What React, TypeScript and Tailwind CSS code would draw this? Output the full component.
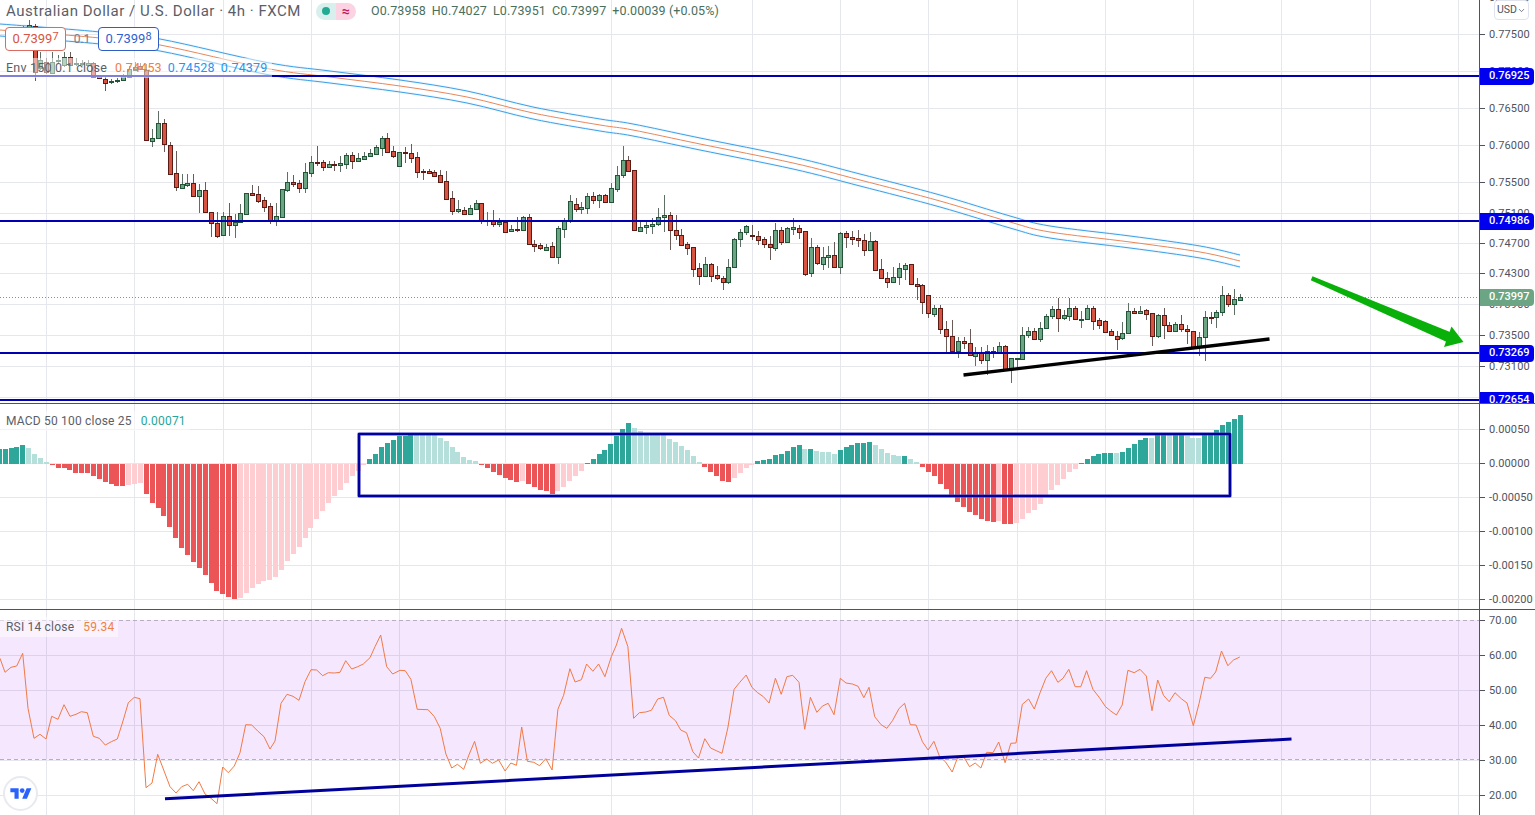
import { ChevronDown } from "lucide-react";

// chart geometry shared by all panes
const LAST_X = 1240;
const STEP = 5.88;
const GRID_X = [46, 134, 223, 311, 399, 505, 611, 752, 840, 928, 1017, 1105, 1193, 1281, 1370, 1458];

// candles: [body top, body bottom, wick top, wick bottom, up]
type Candle = [number, number, number, number, number];
const candles: Candle[] = [
  [32, 35, 30, 37, 1], [30, 33, 28, 35, 0], [28, 31, 26, 33, 1], [25, 33, 20, 40, 1], [26, 72, 24, 81, 0],
  [60, 68, 52, 70, 1], [62, 72, 58, 74, 0], [62, 73, 52, 74, 1], [60, 61, 55, 64, 1], [57, 65, 52, 67, 1],
  [57, 65, 52, 66, 0], [63, 64, 58, 66, 1], [63, 64, 60, 66, 1], [63, 65, 60, 66, 1], [63, 77, 62, 78, 0],
  [76, 78, 75, 79, 0], [79, 83, 76, 91, 0], [81, 82, 79, 84, 1], [80, 81, 78, 83, 1], [75, 80, 74, 81, 1],
  [69, 77, 66, 78, 1], [67, 70, 62, 71, 1], [66, 69, 63, 70, 0], [70, 140, 64, 140, 0], [137.5, 140.5, 129, 147, 1],
  [123, 137.5, 111, 138, 1], [123, 144, 119, 152, 0], [144.5, 173, 142, 174, 0], [173, 187, 151, 191, 0], [184, 188, 174, 189, 1],
  [183, 185, 174, 187, 1], [183, 196, 174, 197, 0], [190, 196, 184, 213, 1], [190, 212, 182, 213, 0], [212, 223, 212, 237, 0],
  [223, 236, 212, 238, 0], [216, 235, 212, 236, 1], [216, 225, 203, 236, 0], [222, 225, 214, 238, 1], [213, 222, 204, 223, 1],
  [193, 214, 193, 214, 1], [193, 195, 185, 195, 0], [194, 201, 186, 203, 0], [200, 207, 197, 212, 0], [206, 221, 203, 224, 0],
  [216, 221, 203, 226, 1], [189, 217, 189, 217, 1], [182, 190, 172, 192, 1], [182, 184, 175, 187, 0], [183, 188, 180, 193, 0],
  [172, 188, 163, 193, 1], [162, 173, 156, 177, 1], [162, 163, 146, 166, 0], [162, 167, 160, 171, 0], [164, 167, 161, 168, 1],
  [164, 165, 161, 171, 0], [163, 165, 156, 172, 1], [155, 164, 153, 169, 1], [155, 161, 152, 169, 0], [158, 161, 153, 161, 1],
  [156, 159, 152, 159, 1], [153, 156, 149, 157, 1], [147, 154, 145, 155, 1], [138, 148, 136, 156, 1], [138, 152, 133, 152, 0],
  [151, 156, 146, 158, 0], [152, 166, 152, 167, 1], [152, 153, 147, 163, 0], [153, 158, 144, 163, 0], [157, 172, 152, 178, 0],
  [171, 172, 169, 180, 0], [171, 173, 169, 173, 0], [172, 176, 170, 177, 0], [175, 182, 170, 183, 0], [181, 199, 171, 199, 0],
  [198, 211, 191, 215, 0], [209, 211, 200, 213, 1], [210, 214, 207, 215, 0], [208, 214, 205, 214, 1], [203, 209, 200, 210, 1],
  [203, 221, 203, 224, 0], [220, 221, 212, 226, 1], [220, 224, 210, 227, 0], [222, 224, 218, 227, 1], [222, 232, 220, 232, 0],
  [229, 231, 225, 232, 1], [229, 230, 217, 232, 0], [217, 230, 216, 231, 1], [217, 244, 214, 245, 0], [244, 246, 240, 252, 0],
  [245, 248, 243, 250, 0], [246.5, 249, 244, 250, 1], [246, 257, 242, 258, 0], [228, 257, 226, 264, 1], [221, 229, 218, 238, 1],
  [201, 221, 195, 223, 1], [204, 209, 198, 212, 0], [207, 209, 202, 214, 1], [196, 208, 193, 214, 1], [196, 200, 192, 204, 0],
  [195, 200, 194, 208, 1], [195, 202, 194, 203, 0], [188, 202, 183, 203, 1], [175, 189, 166, 192, 1], [160, 175, 146, 178, 1],
  [160, 171, 156, 172, 0], [170, 230, 170, 230, 0], [226.5, 230, 221, 232, 1], [225, 227, 222, 234, 1], [224, 226, 218, 234, 1],
  [217, 224, 208, 226, 1], [215, 217, 195, 232, 1], [215, 230, 212, 250, 0], [230, 235, 215, 240, 0], [235, 245, 229, 246, 0],
  [244, 247.5, 242, 255, 0], [247, 268.5, 247, 277, 0], [268, 276, 263, 285, 0], [264, 276, 257, 276, 1], [264, 276, 263, 282, 0],
  [275, 278, 266, 280, 0], [278, 281.5, 276, 290, 0], [267, 282, 259, 284, 1], [239, 267, 238, 268, 1], [232, 239, 229, 247, 1],
  [226, 232, 225, 235, 1], [235, 236, 225, 240, 0], [235.5, 239.5, 231, 245, 0], [239, 244, 237, 248, 0], [244, 247, 236, 260, 0],
  [230, 247.5, 223, 251, 1], [230, 242, 227, 245, 0], [228, 242, 227, 243, 1], [227, 229, 218, 235, 1], [227.5, 231.5, 225, 239, 0],
  [231, 274, 231, 276, 0], [247, 273, 238, 277, 1], [247, 263, 245, 265, 0], [257, 263.5, 247, 270, 1], [255, 257, 246, 268, 1],
  [255, 267, 242, 268, 0], [233, 267, 232, 274, 1], [233, 237, 231, 248, 0], [237, 238.5, 231, 245, 0], [238, 240, 230, 247, 0],
  [240, 250, 234, 256, 0], [241, 250, 232, 251, 1], [241, 270, 240, 271, 0], [269, 278, 259, 279, 0], [278, 282, 272, 288, 0],
  [277, 282, 267, 283, 1], [268, 277, 263, 285, 1], [264.5, 268.5, 263, 280, 1], [264, 284, 264, 285, 0], [284, 285.5, 278, 300, 0],
  [285, 302, 284, 314, 0], [295, 313, 295, 318, 0], [308, 313.5, 305, 317, 1], [308, 329, 305, 334, 0], [329, 336, 321, 353, 0],
  [336, 350.5, 320, 354, 0], [341, 350.5, 337, 358, 1], [341, 343, 337, 349, 0], [343, 355, 329, 356, 0], [353, 355.5, 347, 366, 1],
  [353, 360, 347, 364, 0], [351, 360, 345, 375, 1], [351, 352, 347, 358, 0], [346, 352, 342, 352, 1], [346, 369, 345, 370, 0],
  [358, 369, 358, 383, 1], [358, 359, 358, 368, 1], [335, 359, 327, 360, 1], [331, 335, 327, 338, 1], [331, 339, 328, 340, 0],
  [328, 339, 322, 342, 1], [316, 328, 314, 329, 1], [309, 316, 306, 319, 1], [309, 318, 298, 332, 0], [315, 318, 310, 320, 1],
  [308, 316, 298, 321, 1], [308, 319, 306, 320, 0], [319, 319.5, 311, 328, 1], [308, 319, 305, 320, 1], [308, 320.5, 306, 330, 0],
  [320, 325, 318, 329, 0], [321, 331.5, 320, 333, 0], [331, 335, 329, 336, 0], [335.5, 338.5, 331, 350, 0], [333, 338, 322, 340, 1],
  [311, 333, 303, 334, 1], [311, 312.5, 308, 314, 0], [311, 313, 306, 314, 1], [310, 313.5, 309, 320, 0], [313, 336, 313, 346, 0],
  [315, 336, 314, 338, 1], [315, 325, 308, 339, 0], [325, 331, 322, 332, 0], [324, 330.5, 322, 331, 1], [324, 329, 315, 332, 0],
  [329, 331, 325, 344, 0], [331, 347, 331, 348, 0], [337, 347, 332, 356, 1], [317, 337, 311, 361, 1], [317, 317.5, 312, 324, 0],
  [312, 317, 310, 328, 1], [295, 312, 286, 316, 1], [295, 304, 293, 307, 0], [299, 304, 289, 315, 1], [297, 299.5, 294, 301, 1],
];

// envelope basis as x,y pairs, bands sit 6px either side
const envBasis: [number, number][] = [
  [0, 30], [40, 33], [100, 38], [160, 45], [267, 68.5], [330, 77], [400, 86], [467, 97], [533, 113], [600, 125], [633, 130],
  [700, 144], [793, 163], [860, 180], [940, 201], [1010, 222], [1050, 232], [1130, 242], [1200, 252], [1240, 261],
];

const macdRuns: [string, number[]][] = [
  ["G", [15, 15, 16, 17, 19]],
  ["g", [16, 10, 6, 1.5]],
  ["R", [-1.5, -4.5, -4.5, -6.5, -9, -9.5, -9.5, -12.5, -15.5, -18.5, -20.5, -22.5, -22.5]],
  ["r", [-21.5, -20, -19.5]],
  ["R", [-30.5, -39.5, -44.5, -52.5, -63.5, -74.5, -84.5, -91.5, -98.5, -104.5, -111.5, -119.5, -127.5, -130.5, -133.5, -135.5]],
  ["r", [-134.5, -129.5, -124.5, -120.5, -117.5, -116.5, -113.5, -106.5, -97.5, -90.5, -83.5, -74.5, -64.5, -55.5, -47.5, -39.5, -32.5, -26.5, -19.5, -12.5, -7.5, -1.5]],
  ["G", [4.5, 10, 17, 21, 24, 28, 28, 31]],
  ["g", [30, 30, 29, 29, 26, 23, 17, 12, 7, 4, 3]],
  ["R", [-1.5, -4.5, -8, -11, -14, -16, -18]],
  ["r", [-17]],
  ["R", [-20, -23, -26, -27, -30]],
  ["r", [-27, -23, -17, -12, -7]],
  ["G", [0.5, 5, 10, 14, 20, 28, 35, 41]],
  ["g", [36, 33, 29, 29, 29, 29, 25, 22, 18, 14, 8, 1.5]],
  ["R", [-3.5, -8.5, -12.5, -17.5, -18.5]],
  ["r", [-14.5, -9.5, -4.5, -1.5]],
  ["G", [2.5, 3.5, 4.5, 8.5, 10, 13, 17, 19]],
  ["g", [15]],
  ["G", [15]],
  ["g", [13, 12, 12, 10]],
  ["G", [14, 17, 19, 21, 21, 22]],
  ["g", [19, 15, 11, 9, 8]],
  ["G", [8]],
  ["g", [5, 2]],
  ["R", [-3, -8, -12, -20, -25, -32, -38, -43, -48, -51, -55, -57, -58]],
  ["r", [-57]],
  ["R", [-60, -60]],
  ["r", [-59, -55, -49, -46, -40, -32, -26, -21, -15, -8, -5]],
  ["G", [0.5, 5, 8, 10, 11, 11]],
  ["g", [11]],
  ["G", [12, 16, 20, 24, 26]],
  ["g", [26]],
  ["G", [29, 29]],
  ["g", [29]],
  ["G", [29, 29]],
  ["g", [28, 26, 26]],
  ["G", [29, 31, 34, 39, 42, 45, 49]],
];

const macdColors: Record<string, string> = { G: "#2fa69a", g: "#b4dfdb", R: "#ec5558", r: "#fdcdd2" };

// rsi read in thirds of a pixel on y
const rsiLeft = [
  0, 160, 15, 202, 33, 187, 50, 183, 68, 145, 84, 310, 102, 400, 120, 388, 138, 402, 155, 334, 174, 343, 192, 299, 210, 334, 228, 328,
  244, 320, 262, 323, 280, 394, 298, 400, 316, 420, 334, 410, 352, 402, 370, 345, 385, 293, 403, 277, 420, 281, 438, 548, 456, 534, 473, 448,
  491, 495, 510, 545, 528, 564, 545, 545, 563, 538, 580, 557, 597, 530, 615, 567, 633, 580, 651, 596, 668, 486, 685, 503, 703, 483, 720, 443,
  737, 359, 755, 360, 773, 378, 792, 395, 810, 432, 825, 408, 843, 295, 861, 268, 879, 274, 897, 286, 915, 230, 933, 194, 950, 195, 968, 212,
  985, 203, 1003, 204, 1020, 202, 1037, 167, 1055, 192, 1073, 185, 1090, 177, 1110, 158, 1125, 125, 1142, 90, 1160, 185, 1178, 207,
];
const rsiRight = [
  0, 181, 9, 182, 19, 208, 30, 298, 49, 299, 60, 320, 70, 355, 80, 432, 90, 474, 100, 463, 111, 478, 120, 435, 130, 394, 140, 460, 151, 447,
  161, 460, 172, 450, 183, 483, 193, 459, 203, 466, 212, 351, 222, 454, 233, 457, 243, 467, 254, 446, 265, 480, 275, 298, 285, 256, 296, 176,
  305, 216, 316, 209, 325, 162, 336, 184, 346, 162, 357, 200, 368, 140, 377, 105, 386, 55, 397, 110, 407, 325, 417, 308, 428, 306, 438, 301,
  449, 267, 459, 262, 469, 316, 480, 332, 489, 360, 499, 368, 510, 425, 520, 444, 531, 386, 541, 414, 551, 422, 561, 430, 571, 354, 582, 238,
  592, 217, 603, 195, 613, 232, 623, 248, 633, 260, 643, 279, 654, 205, 664, 253, 674, 200, 684, 196, 695, 217, 705, 358, 715, 262, 726, 307,
  736, 288, 746, 280, 756, 314, 767, 205, 777, 219, 788, 222, 798, 229, 808, 263, 817, 232, 827, 320, 838, 344, 848, 355, 858, 332, 869, 296,
  879, 280, 889, 344, 899, 345, 910, 395, 920, 420, 930, 394, 940, 440, 950, 455, 962, 486, 971, 444, 982, 440, 992, 470, 1002, 459, 1012, 474,
  1022, 427, 1033, 428, 1043, 396, 1054, 458, 1064, 400, 1073, 399, 1084, 283, 1095, 267, 1105, 297, 1115, 248, 1125, 205, 1135, 182, 1146, 217,
  1155, 205, 1165, 178, 1176, 230, 1186, 230, 1196, 182, 1207, 238, 1218, 262, 1229, 290, 1238, 303, 1248, 315, 1258, 285, 1268, 181, 1279, 188,
  1289, 178, 1300, 198, 1310, 302, 1320, 210, 1330, 256, 1340, 275, 1350, 248, 1361, 266, 1371, 279, 1382, 347, 1392, 280, 1402, 202, 1412, 205,
  1421, 186, 1431, 123, 1442, 167, 1452, 150, 1463, 141,
];

function rsiPoints() {
  const out: string[] = [];
  for (let i = 0; i < rsiLeft.length; i += 2) {
    out.push(`${(rsiLeft[i] / 3).toFixed(1)},${(rsiLeft[i + 1] / 3 - 5).toFixed(1)}`);
  }
  for (let i = 0; i < rsiRight.length; i += 2) {
    out.push(`${(400 + rsiRight[i] / 1.742).toFixed(1)},${(rsiRight[i + 1] / 3).toFixed(1)}`);
  }
  return out.join(" ");
}

// y values below are relative to each pane's own top
const mainGridY = [34, 71, 108, 145, 182, 213, 243, 273, 304, 335, 366, 397];
const macdGridY = [25, 59, 93, 127, 161, 195];
const rsiGridY = [45, 80, 115, 185];

const mainTicks = [
  [-3, "0.77900"], [34, "0.77500"], [71, "0.77000"], [108, "0.76500"], [145, "0.76000"], [182, "0.75500"], [213, "0.75100"],
  [243, "0.74700"], [273, "0.74300"], [304, "0.73900"], [335, "0.73500"], [366, "0.73100"], [397, "0.72700"],
] as [number, string][];
const macdTicks = [
  [25, "0.00050"], [59, "0.00000"], [93, "-0.00050"], [127, "-0.00100"], [161, "-0.00150"], [195, "-0.00200"],
] as [number, string][];
const rsiTicks = [
  [10, "70.00"], [45, "60.00"], [80, "50.00"], [115, "40.00"], [150, "30.00"], [185, "20.00"],
] as [number, string][];

const levels = [
  [76, "0.76925"], [221, "0.74986"], [353, "0.73269"], [400, "0.72654"],
] as [number, string][];

function xAt(i: number, total: number) {
  return LAST_X - (total - 1 - i) * STEP;
}

// catmull-rom through the points so the bands don't kink
function smoothPath(pts: [number, number][]) {
  let d = `M${pts[0][0]},${pts[0][1]}`;
  for (let i = 0; i < pts.length - 1; i++) {
    const p0 = pts[Math.max(i - 1, 0)];
    const p1 = pts[i];
    const p2 = pts[i + 1];
    const p3 = pts[Math.min(i + 2, pts.length - 1)];
    const c1x = p1[0] + (p2[0] - p0[0]) / 6;
    const c1y = p1[1] + (p2[1] - p0[1]) / 6;
    const c2x = p2[0] - (p3[0] - p1[0]) / 6;
    const c2y = p2[1] - (p3[1] - p1[1]) / 6;
    d += ` C${c1x.toFixed(1)},${c1y.toFixed(1)} ${c2x.toFixed(1)},${c2y.toFixed(1)} ${p2[0]},${p2[1]}`;
  }
  return d;
}

function Grid({ height, ys }: { height: number; ys: number[] }) {
  return (
    <g stroke="#e6e7ec" strokeWidth="1" shapeRendering="crispEdges">
      {GRID_X.map((x) => (
        <line key={x} x1={x + 0.5} x2={x + 0.5} y1={0} y2={height} />
      ))}
      {ys.map((y) => (
        <line key={y} x1={0} x2={1479} y1={y + 0.5} y2={y + 0.5} />
      ))}
    </g>
  );
}

function Candles() {
  return (
    <g shapeRendering="crispEdges">
      {candles.map(([top, bottom, wickTop, wickBottom, up], i) => {
        const cx = Math.round(xAt(i, candles.length));
        const edge = up ? "#225437" : "#5b1a13";
        return (
          <g key={i}>
            <line x1={cx + 0.5} x2={cx + 0.5} y1={wickTop} y2={wickBottom} stroke={up ? "#5f6f66" : "#6a5a58"} />
            <rect x={cx - 1.5} y={Math.round(top) + 0.5} width={4} height={Math.max(1, Math.round(bottom - top))} fill={up ? "#6ba583" : "#d75442"} stroke={edge} />
          </g>
        );
      })}
    </g>
  );
}

function Envelope() {
  const band = (off: number) => smoothPath(envBasis.map(([x, y]) => [x, y + off] as [number, number]));
  return (
    <g fill="none">
      <path d={band(-6)} stroke="#90caf9" strokeWidth="3" strokeOpacity="0.14" />
      <path d={band(6)} stroke="#90caf9" strokeWidth="3" strokeOpacity="0.14" />
      <path d={band(-6)} stroke="#3d9fe6" strokeWidth="1" />
      <path d={band(0)} stroke="#e8875a" strokeWidth="1" />
      <path d={band(6)} stroke="#3d9fe6" strokeWidth="1" />
    </g>
  );
}

function MainChart() {
  return (
    <svg className="absolute inset-0" width="1479" height="403">
      <Grid height={403} ys={mainGridY} />
      <Envelope />
      <line x1="0" x2="1479" y1="297.5" y2="297.5" stroke="#7c9a88" strokeDasharray="1 2" />
      <Candles />
      <g stroke="#0000b0" strokeWidth="2" shapeRendering="crispEdges">
        {levels.map(([y]) => (
          <line key={y} x1="0" x2="1479" y1={y} y2={y} />
        ))}
      </g>
      <line x1="963.5" y1="375" x2="1269.5" y2="339" stroke="#000" strokeWidth="3.3" />
      <polygon points="1312.5,276.3 1310.8,280.3 1448,342.5 1452.5,333" fill="#0ab00a" />
      <polygon points="1463.5,342 1451.5,326.5 1444,347" fill="#0ab00a" />
    </svg>
  );
}

function MacdChart() {
  const bars = macdRuns.flatMap(([c, vals]) => vals.map((v) => ({ c, v })));
  const zero = 59.5;
  return (
    <svg className="absolute inset-0" width="1479" height="205">
      <Grid height={205} ys={macdGridY} />
      <g shapeRendering="crispEdges">
        {bars.map(({ c, v }, i) => {
          const x = Math.round(xAt(i, bars.length) - 2.5);
          return <rect key={i} x={x} y={v > 0 ? zero - v : zero} width={5} height={Math.abs(v)} fill={macdColors[c]} />;
        })}
      </g>
      <rect x="359" y="30" width="871" height="62" fill="none" stroke="#8080e0" strokeOpacity="0.45" strokeWidth="4" strokeLinejoin="round" />
      <rect x="359" y="30" width="871" height="62" fill="none" stroke="#00009c" strokeWidth="2.6" strokeLinejoin="round" />
    </svg>
  );
}

function RsiChart() {
  return (
    <svg className="absolute inset-0" width="1479" height="205">
      <Grid height={205} ys={[...rsiGridY, 150]} />
      <rect x="0" y="10" width="1479" height="139.5" fill="#9c10e8" fillOpacity="0.1" />
      <g stroke="#b9adc0" strokeDasharray="4 3" shapeRendering="crispEdges">
        <line x1="0" x2="1479" y1="10.5" y2="10.5" />
        <line x1="0" x2="1479" y1="149.5" y2="149.5" />
      </g>
      <polyline points={rsiPoints()} fill="none" stroke="#f27a45" strokeWidth="1" />
      <line x1="165" y1="188.7" x2="1291.5" y2="129" stroke="#00009c" strokeWidth="3" />
    </svg>
  );
}

function Axis({ ticks, children }: { ticks: [number, string][]; children?: React.ReactNode }) {
  return (
    <div className="relative w-[56px] shrink-0 overflow-hidden border-l border-[#50535e] text-[11px] text-[#50535e]">
      {ticks.map(([y, label]) => (
        <div key={label} className="absolute left-0 flex h-4 items-center" style={{ top: y - 7 }}>
          <span className="-mt-0.5 h-px w-[5px] bg-[#50535e]" />
          <span className="ml-[4px] tracking-[0.1px]">{label}</span>
        </div>
      ))}
      {children}
    </div>
  );
}

function PriceTag({ y, label, green }: { y: number; label: string; green?: boolean }) {
  return (
    <div
      className={`absolute left-0 flex h-[17px] w-[54px] items-center rounded-r-sm pl-[9px] pt-px font-medium text-white ${green ? "bg-[#6ba583]" : "bg-[#0000ee]"}`}
      style={{ top: y - 8.5 }}
    >
      {label}
    </div>
  );
}

function Legend() {
  return (
    <div className="absolute left-0 top-0 flex flex-col items-start">
      <div className="flex h-[22px] items-center pl-[6px]">
        <span className="text-[15px] tracking-[0.52px] text-[#5b5e68]">Australian Dollar / U.S. Dollar · 4h · FXCM</span>
        <div className="ml-[15px] flex h-[17px] w-[40px] overflow-hidden rounded-full">
          <div className="flex w-[20px] items-center justify-center bg-[#d8f0ed]">
            <span className="h-2 w-2 rounded-full bg-[#22ab94]" />
          </div>
          <div className="flex w-[20px] items-center justify-center bg-[#fbd3e3] text-[14px] font-bold leading-none text-[#c2185b]">≈</div>
        </div>
        <div className="ml-[15px] flex gap-[6px] text-[12.5px] tracking-[0.1px] text-[#4a6f5c]">
          <span>O0.73958</span>
          <span>H0.74027</span>
          <span>L0.73951</span>
          <span>C0.73997</span>
          <span>+0.00039 (+0.05%)</span>
        </div>
      </div>
      <div className="ml-[5px] mt-[5px] flex h-[24px] items-center text-[13px]">
        <div className="flex h-[24px] w-[61px] items-center justify-center rounded border border-[#d96b60] bg-white text-[#d75442]">
          0.7399<span className="-mt-1 text-[11px]">7</span>
        </div>
        <span className="w-[32px] text-center text-[12px] text-[#787b86]">0.1</span>
        <div className="flex h-[24px] w-[61px] items-center justify-center rounded border border-[#2f5fc2] bg-white text-[#2f5fd0]">
          0.7399<span className="-mt-1 text-[11px]">8</span>
        </div>
      </div>
      <div className="mt-[7px] flex h-[20px] items-center gap-[6px] bg-white/50 pl-[6px] pr-[4px] text-[12.5px] tracking-[0.2px]">
        <span className="text-[#5b5e68]">Env 150 0.1 close</span>
        <span className="ml-[2px] text-[#f08040]">0.74453</span>
        <span className="text-[#2196f3]">0.74528</span>
        <span className="text-[#2196f3]">0.74379</span>
      </div>
    </div>
  );
}

function PaneLegend({ name, value, tone }: { name: string; value: string; tone: string }) {
  return (
    <div className="absolute left-0 top-[7px] flex h-[20px] items-center gap-[9px] bg-white/50 pl-[6px] pr-[4px] text-[12px] tracking-[0.2px]">
      <span className="text-[#5b5e68]">{name}</span>
      <span className={tone}>{value}</span>
    </div>
  );
}

export default function App() {
  return (
    <div className="flex h-[815px] w-[1535px] flex-col overflow-hidden bg-white font-['Roboto',sans-serif]">
      {/* Price pane */}
      <div className="flex h-[404px] shrink-0 border-b border-[#50535e]">
        <div className="relative w-[1479px] shrink-0 overflow-hidden">
          <MainChart />
          <Legend />
        </div>
        <Axis ticks={mainTicks}>
          {levels.map(([y, label]) => (
            <PriceTag key={label} y={y} label={label} />
          ))}
          <PriceTag y={297} label="0.73997" green />
          <div className="absolute left-[14px] top-0 flex h-[20px] w-[35px] items-center justify-center rounded border border-[#e0e3eb] bg-white text-[10.5px]">
            USD
            <ChevronDown size={9} strokeWidth={2} />
          </div>
        </Axis>
      </div>

      {/* MACD pane */}
      <div className="flex h-[206px] shrink-0 border-b border-[#50535e]">
        <div className="relative w-[1479px] shrink-0 overflow-hidden">
          <MacdChart />
          <PaneLegend name="MACD 50 100 close 25" value="0.00071" tone="text-[#26a69a]" />
        </div>
        <Axis ticks={macdTicks} />
      </div>

      {/* RSI pane */}
      <div className="flex min-h-0 flex-1">
        <div className="relative w-[1479px] shrink-0 overflow-hidden">
          <RsiChart />
          <PaneLegend name="RSI 14 close" value="59.34" tone="text-[#f08040]" />
          <div className="absolute bottom-[4px] left-[3px] flex h-[35px] w-[35px] items-center justify-center rounded-full border-2 border-[#e8eaf0] bg-white">
            <svg width="22" height="13" viewBox="0 2 36 22">
              <path d="M14 22H7V11H0V4h14v18zM28 22h-8l7.5-18h8L28 22z" fill="#2962ff" />
              <circle cx="20" cy="8" r="4" fill="#2962ff" />
            </svg>
          </div>
        </div>
        <Axis ticks={rsiTicks} />
      </div>
    </div>
  );
}
